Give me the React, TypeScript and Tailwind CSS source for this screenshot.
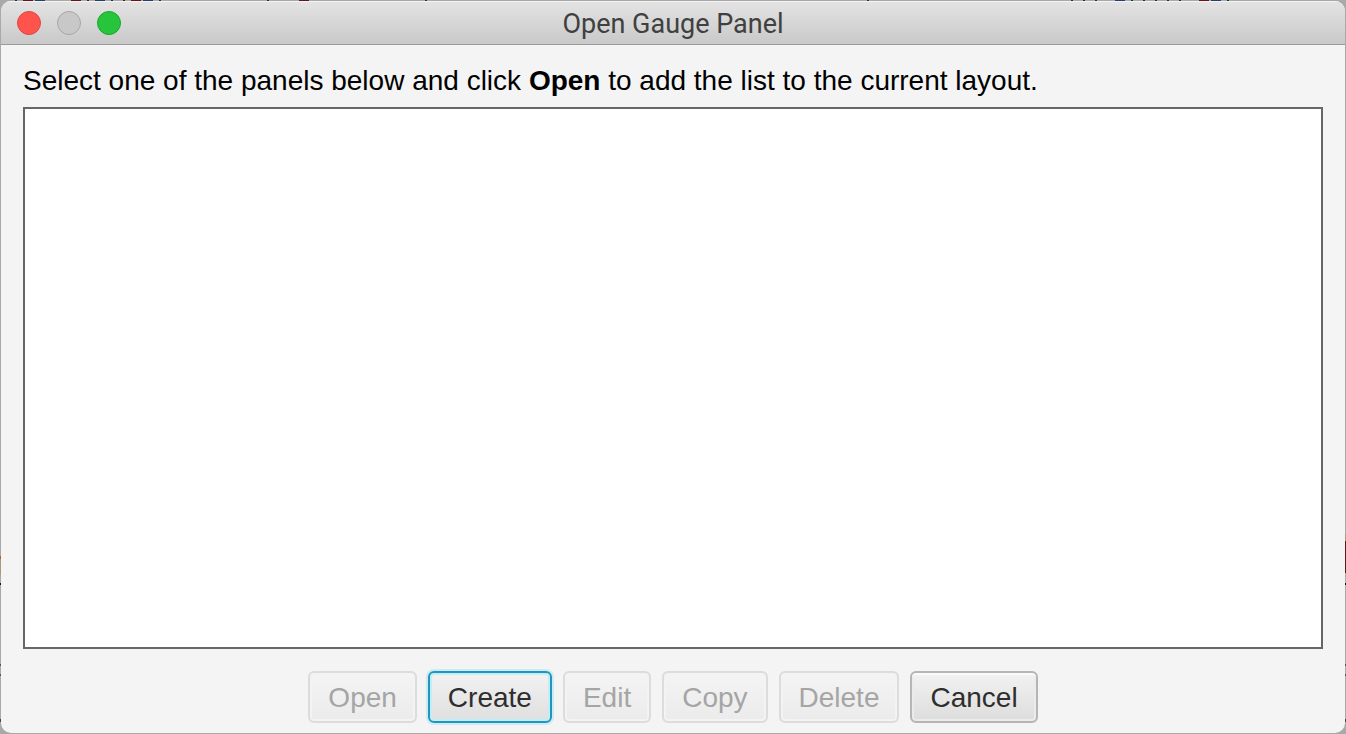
const actions = [
  { label: 'Open', disabled: true },
  { label: 'Create', focused: true },
  { label: 'Edit', disabled: true },
  { label: 'Copy', disabled: true },
  { label: 'Delete', disabled: true },
  { label: 'Cancel' },
];

// [x, width, color] of the artwork peeking out above the title bar
const topSpecks: [number, number, string][] = [
  [15, 2, '#1c2f50'], [23, 10, '#6b1216'], [35, 10, '#24406e'], [71, 10, '#6b1216'],
  [87, 2, '#5a1518'], [95, 10, '#24406e'], [111, 2, '#1c2f50'], [123, 2, '#5a1518'],
  [131, 10, '#6b1216'], [143, 10, '#24406e'], [159, 2, '#1c2f50'], [267, 2, '#1c2f50'],
  [299, 10, '#6b1216'], [425, 2, '#333333'], [867, 2, '#333333'], [1071, 2, '#1c2f50'],
  [1083, 2, '#5a1518'], [1095, 2, '#1c2f50'], [1115, 10, '#24406e'], [1131, 2, '#1c2f50'],
  [1143, 2, '#5a1518'], [1155, 2, '#1c2f50'], [1167, 2, '#1c2f50'], [1179, 2, '#1c2f50'],
  [1199, 10, '#6b1216'], [1211, 10, '#24406e'], [1227, 2, '#1c2f50'],
];

interface ActionButtonProps {
  label: string;
  disabled?: boolean;
  focused?: boolean;
}

function ActionButton({ label, disabled, focused }: ActionButtonProps) {
  const look = focused
    ? 'border-[#1e96be] bg-linear-to-b from-[#f2f2f2] to-[#dfdfdf] text-[#2e2e2e] shadow-[0_0_0_2px_#cfeaf3,inset_0_0_0_2px_#c3eef8]'
    : disabled
      ? 'border-[#dcdcdc] bg-linear-to-b from-[#f4f4f4] to-[#ebebeb] text-[#a5a5a5] shadow-[inset_0_0_0_2px_#f3f3f3]'
      : 'border-[#b5b5b5] bg-linear-to-b from-[#f2f2f2] to-[#dddddd] text-[#2e2e2e] shadow-[inset_0_2px_0_0_#fafafa,inset_0_0_0_2px_#ebebeb]';

  return (
    <button type="button" disabled={disabled} className={`h-[52px] rounded-md border-2 px-[18px] pt-0.5 text-[28px] leading-8 ${look}`}>
      {label}
    </button>
  );
}

export default function App() {
  return (
    <div className="relative flex h-screen flex-col bg-[#a9a9a9] p-px font-['Liberation_Sans',Arial,sans-serif]">
      <svg aria-hidden="true" className="absolute top-0 left-0 h-px w-full">
        {topSpecks.map(([x, width, color]) => (
          <rect key={x} x={x} width={width} height="1" fill={color} />
        ))}
      </svg>
      <svg aria-hidden="true" className="absolute bottom-0 left-0 h-[200px] w-px">
        <rect y="22" width="1" height="3" fill="#9a6a40" />
        <rect y="25" width="1" height="16" fill="#b3957c" />
        <rect y="49" width="1" height="2" fill="#111111" />
        <rect y="130" width="1" height="2" fill="#555555" />
        <rect y="140" width="1" height="2" fill="#555555" />
        <rect y="185" width="1" height="3" fill="#444444" />
      </svg>
      <svg aria-hidden="true" className="absolute right-0 bottom-0 h-[200px] w-px">
        <rect y="0" width="1" height="7" fill="#b89878" />
        <rect y="7" width="1" height="32" fill="#571d17" />
        <rect y="49" width="1" height="2" fill="#111111" />
        <rect y="130" width="1" height="2" fill="#555555" />
        <rect y="140" width="1" height="2" fill="#555555" />
        <rect y="185" width="1" height="3" fill="#444444" />
      </svg>

      <div className="flex min-h-0 flex-1 flex-col overflow-hidden rounded-[10px] bg-[#f4f4f4]">
        <header className="grid h-11 shrink-0 grid-cols-[1fr_auto_1fr] items-center border-b border-[#999999] bg-linear-to-b from-[#e4e4e4] to-[#c9c9c9] px-4 shadow-[inset_0_1px_0_#f3f3f3]">
          <div className="flex gap-4">
            <button type="button" aria-label="Close" className="size-6 rounded-full border border-[#e04540] bg-[#fe544d]" />
            <button type="button" aria-label="Minimize" disabled className="size-6 rounded-full border border-[#a6a6a6] bg-[#c8c8c8]" />
            <button type="button" aria-label="Zoom" className="size-6 rounded-full border border-[#1aa52c] bg-[#27c53c]" />
          </div>
          <h1 className="pt-0.5 font-[Roboto,'Liberation_Sans',sans-serif] text-[27px] leading-8 text-[#404040]">Open Gauge Panel</h1>
        </header>

        <main className="flex min-h-0 flex-1 flex-col px-[22px] pt-5 pb-[10px]">
          <p id="panel-hint" className="text-[28px] leading-8 text-black">
            Select one of the panels below and click <b>Open</b> to add the list to the current layout.
          </p>
          <ul aria-labelledby="panel-hint" className="mt-[10px] flex-1 border-2 border-[#666666] bg-white" />
          <div className="mt-[22px] flex justify-center gap-[11px]">
            {actions.map((action) => (
              <ActionButton key={action.label} {...action} />
            ))}
          </div>
        </main>
      </div>
    </div>
  );
}
